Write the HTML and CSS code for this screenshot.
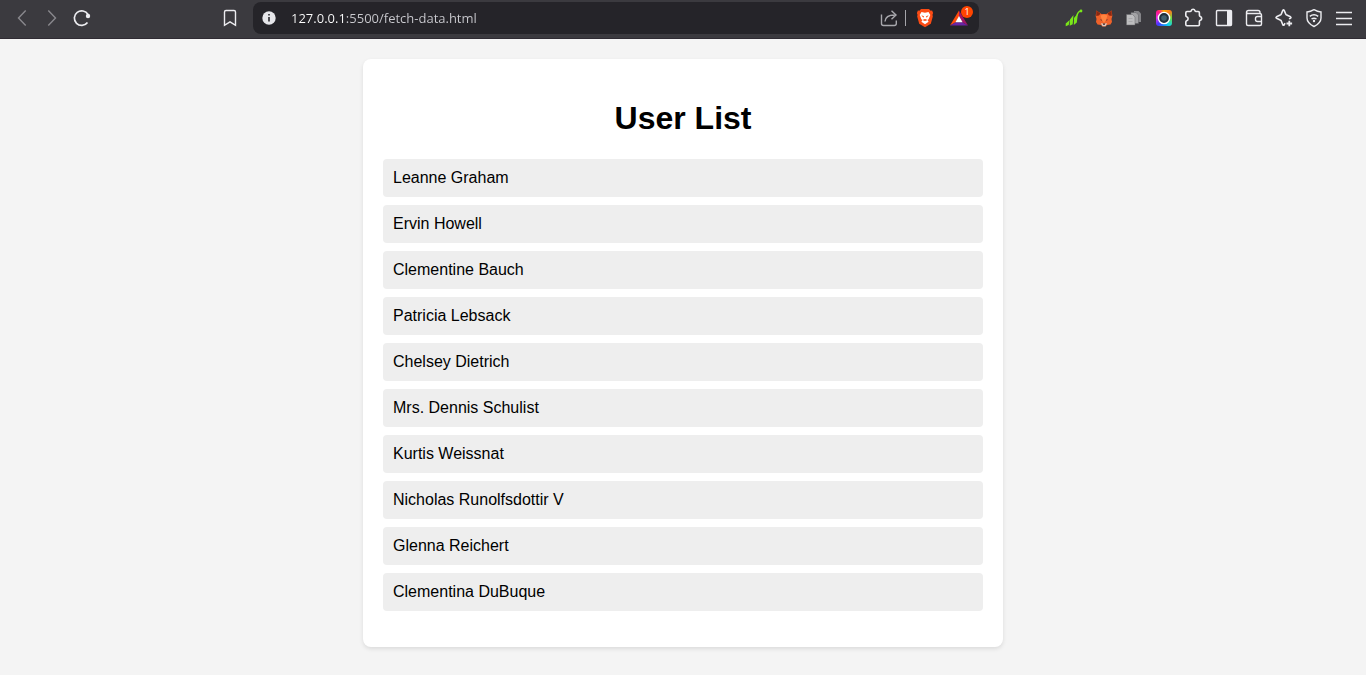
FILE: index.html
```html
<!DOCTYPE html>
<html lang="en">
<head>
<meta charset="utf-8">
<meta name="viewport" content="width=device-width, initial-scale=1">
<title>User List</title>
<link rel="stylesheet" href="styles.css">
</head>
<body>
<header class="toolbar">
  <nav class="group" aria-label="Navigation">
    <button class="tool dim" aria-label="Back"><svg class="icon" viewBox="0 0 24 24"><path d="M15.700 4.500L8.500 12l7.200 7.500"/></svg></button>
    <button class="tool dim" aria-label="Forward"><svg class="icon" viewBox="0 0 24 24"><path d="M8.300 4.500L15.500 12l-7.200 7.500"/></svg></button>
    <button class="tool" aria-label="Reload"><svg class="icon" viewBox="0 0 24 24"><path stroke-width="1.700" d="M18 8.500a7.300 7.300 0 1 0-.5 8"/><circle class="solid" cx="18" cy="10" r="2.200"/></svg></button>
  </nav>
  <button class="tool bookmark" aria-label="Bookmark"><svg class="icon" viewBox="0 0 24 24"><path d="M6.500 19.300V6q0-1.500 1.500-1.500h8q1.500 0 1.500 1.500v13.300L12 15.800z"/></svg></button>
  <div class="address">
    <button class="tool" aria-label="Site information"><svg class="icon" viewBox="0 0 24 24"><circle cx="12" cy="12" r="6.700" fill="#e6e6ea" stroke="none"/><path stroke="#29282d" stroke-width="1.600" d="M12 11v4.500M12 8v1.600"/></svg></button>
    <input class="url" id="url" aria-label="Address" type="text" value="127.0.0.1:5500/fetch-data.html" readonly>
    <button class="tool share" aria-label="Share"><svg class="icon" viewBox="0 0 24 24"><path d="M4.500 8.500v9q0 2 2 2h10.800q2 0 2-2v-3M8 15.500q.5-6.500 9.500-6.500M14.500 4.700L19 9l-4.500 4.300"/></svg></button>
    <span class="divider"></span>
    <button class="tool shield" aria-label="Shields"><svg class="icon" viewBox="0 0 24 24"><path fill="#fb4b14" stroke="none" d="M8 3h8l1.600 1.700 1.500-.1 1 2.400-.6 1.700.3 1.800-2 7.200L12 21.300l-5.800-3.600-2-7.200.3-1.800L3.900 7l1-2.400 1.500.1z"/><path fill="#fff" stroke="none" d="M8.500 6l3.500.8 3.500-.8 1.800 3-1.700 4.300-1 .8 1 1.600-3.600 2.600-3.600-2.600 1-1.600-1-.8L6.700 9z"/><path fill="#fb4b14" stroke="none" d="M8.300 9.300l2.700.9-.6 1.600zM15.700 9.300l-2.700.9.600 1.600zM9.300 14l2.700-1 2.700 1-2.700.9z"/></svg></button>
    <button class="tool rewards" aria-label="Rewards"><svg class="icon" viewBox="0 0 24 24"><path fill="#ff4b0b" stroke="none" d="M11 4.500L2 19.500l5.700-3.300L11 10.500z"/><path fill="#a31565" stroke="none" d="M11 4.500L20 19.500l-5.700-3.300L11 10.500z"/><path fill="#6a24a4" stroke="none" d="M2 19.500h18l-5.700-3.300H7.700z"/><path fill="#fff" stroke="none" d="M11 10l3.600 6.300H7.400z"/></svg><span class="badge">1</span></button>
  </div>
  <div class="group extensions">
    <button class="tool" aria-label="Chart extension"><svg class="icon" viewBox="0 0 24 24"><path fill="#79e719" stroke="none" d="M3.700 17.500l4-3.500-1 5-3 1.300zM8 13.500L11.500 9l-.8 9.300-3 1.400zM12 12l4-5-1.200 9.500-3 2.500z"/><path stroke="#79e719" stroke-width="1.500" d="M15 9.500q1-4.300 4-4.500"/><circle cx="19" cy="5" r="1.400" fill="#79e719" stroke="none"/></svg></button>
    <button class="tool" aria-label="Fox extension"><svg class="icon" viewBox="0 0 24 24"><path fill="#f0622a" stroke="none" d="M4.300 4.500L9.500 8h5l5.200-3.500.6 5.500-.8 3 .5 3-1.500 2.500-3.500.5-1.500 1.500h-3L9 19l-3.500-.5L4 16l.5-3-.8-3z"/><path fill="#8b2812" stroke="none" d="M4.300 4.500L8.500 7.500 7 9.500l-2.800.5zM19.700 4.500L15.500 7.500 17 9.500l2.800.5z"/><path fill="#ff8440" stroke="none" d="M8.500 9.500l3.500-1 3.500 1L14 14l-2 3-2-3z"/><path fill="#3a2a2e" stroke="none" d="M8 13.500l1.800.3-.3 1zM16 13.500l-1.800.3.300 1z"/><path fill="#d9c8c0" stroke="none" d="M8.800 17.200l3.200.6 3.200-.6-1.700 3.100h-3z"/><path fill="#3a2a2e" stroke="none" d="M11 17.500h2v1.300h-2z"/></svg></button>
    <button class="tool" aria-label="Pages extension"><svg class="icon" viewBox="0 0 24 24"><path fill="#848488" stroke="none" d="M12 5h4.500L19 7.500V16h-7z"/><path fill="#a2a2a5" stroke="#5c5c60" stroke-width=".5" d="M9 6.500h5L16.500 9v8.500H9z"/><path fill="#bdbdbf" stroke="#66666a" stroke-width=".5" d="M4.500 8.500h6l2.500 2.500v8H4.500z"/><path stroke="#a8a8ab" stroke-width="1" d="M6.500 12.500h4M6.500 15.500h4"/></svg></button>
    <button class="tool" aria-label="Camera extension"><span class="camera"><svg class="icon" viewBox="0 0 24 24"><circle cx="12" cy="12" r="5.600" fill="#23303c" stroke="#fff" stroke-width="1.400"/><circle cx="12" cy="12" r="2.800" fill="#43616d" stroke="none"/></svg></span></button>
    <button class="tool" aria-label="Extensions"><svg class="icon" viewBox="0 0 24 24"><path stroke-width="1.600" stroke-linejoin="round" d="M5 5.500h3q1 0 1.200-.8a2 2 0 0 1 3.800 0q.2.800 1.200.8h2q1.200 0 1.200 1.200v2.500q0 1 .9 1.300a2 2 0 0 1 0 3.800q-.9.300-.9 1.200v3q0 1.200-1.200 1.200H5q-1.200 0-1.200-1.200V16q0-.8.900-1.200a2.200 2.200 0 0 0 0-4.100q-.9-.4-.9-1.200V6.700q0-1.200 1.200-1.200z"/></svg></button>
    <button class="tool" aria-label="Sidebar"><svg class="icon" viewBox="0 0 24 24"><rect x="4.500" y="4.500" width="15" height="15" rx="1"/><path class="solid" d="M15 4.500h4.500v15h-4.500z"/></svg></button>
    <button class="tool" aria-label="Wallet"><svg class="icon" viewBox="0 0 24 24"><path d="M19.500 9.500V18q0 1.500-1.500 1.500H6q-1.500 0-1.500-1.500V6.500q0-2 2-2H16q2 0 2 2v1M4.500 6q0 1.500 1.500 1.500h12q1.500 0 1.500 2M19.500 10.500h-4q-2 0-2 2v1q0 2 2 2h4"/></svg></button>
    <button class="tool" aria-label="Assistant"><svg class="icon" viewBox="0 0 24 24"><path stroke-width="1.600" stroke-linejoin="round" d="M13 17.200l-.8 1.600q-.7 1-1.400 0L9.300 15q-.3-.8-1.100-1.100L4.500 12.200q-1-.7 0-1.400l3.700-1.700q.8-.3 1.100-1.100l1.500-3.600q.7-1 1.400 0L13.700 8q.3.800 1.100 1.100l3.700 1.700q1 .7 0 1.400l-1.500.7"/><path stroke-width="1.800" d="M17.300 14.700v5.600M14.500 17.500h5.600"/></svg></button>
    <button class="tool" aria-label="VPN"><svg class="icon" viewBox="0 0 24 24"><path d="M12 3.700q3.500 2 7 2.300v6q0 5-7 8.500-7-3.500-7-8.500V6q3.500-.3 7-2.300z"/><path stroke-width="1.500" d="M7.800 10.300q4.200-3 8.400 0M9.500 13q2.500-1.700 5 0"/><circle class="solid" cx="12" cy="15" r="1.200"/></svg></button>
    <button class="tool" aria-label="Menu"><svg class="icon" viewBox="0 0 24 24"><path d="M4 6.500h16M4 12.500h16M4 18.500h16"/></svg></button>
  </div>
</header>
<main class="container">
  <h1 class="title">User List</h1>
  <ul class="users">
    <li class="user">Leanne Graham</li>
    <li class="user">Ervin Howell</li>
    <li class="user">Clementine Bauch</li>
    <li class="user">Patricia Lebsack</li>
    <li class="user">Chelsey Dietrich</li>
    <li class="user">Mrs. Dennis Schulist</li>
    <li class="user">Kurtis Weissnat</li>
    <li class="user">Nicholas Runolfsdottir V</li>
    <li class="user">Glenna Reichert</li>
    <li class="user">Clementina DuBuque</li>
  </ul>
</main>
</body>
</html>
```
FILE: styles.css
```css
body {
  margin: 0;
  background: #f4f4f4;
  color: #000;
  font-family: "Liberation Sans", Arial, sans-serif;
  font-size: 16px;
}

.toolbar {
  display: flex;
  align-items: center;
  padding: 2px 7px 4px;
  background: #3b3a3f;
  border-bottom: 1px solid #2f2b33;
}

.group {
  display: flex;
}

.tool {
  position: relative;
  display: flex;
  flex: none;
  align-items: center;
  justify-content: center;
  width: 30px;
  height: 32px;
  padding: 0;
  border: 0;
  background: none;
  color: #ececf0;
}

.dim {
  color: #89888d;
}

.icon {
  display: block;
  flex: none;
  width: 24px;
  height: 24px;
  fill: none;
  stroke: currentColor;
  stroke-width: 1.4;
}

.solid {
  fill: currentColor;
  stroke: none;
}

.bookmark {
  margin-left: 118px;
}

.address {
  display: flex;
  flex: 1;
  align-items: center;
  min-width: 0;
  margin-left: 8px;
  padding: 0 2px 0 1px;
  border-radius: 8px;
  background: #252429;
}

.url {
  flex: 1;
  min-width: 0;
  margin-left: 7px;
  padding: 0;
  border: 0;
  outline: 0;
  background: linear-gradient(90deg, #fff 55px, #cbcbd0 55px);
  background-clip: text;
  color: transparent;
  font-family: "Open Sans", "Noto Sans", sans-serif;
  font-size: 13px;
  line-height: 20px;
}

.share {
  color: #a8a8ad;
}

.divider {
  width: 1px;
  height: 16px;
  margin: 0 4px 0 1px;
  background: #a5a5aa;
}

.rewards {
  width: 34px;
  margin-left: 3px;
}

.badge {
  position: absolute;
  top: 4px;
  right: 4px;
  width: 12px;
  height: 12px;
  border-radius: 50%;
  background: #ff4500;
  color: #fff;
  font: 9px/12px "Open Sans", sans-serif;
  text-align: center;
}

.extensions {
  margin-left: 80px;
}

.camera {
  display: flex;
  align-items: center;
  justify-content: center;
  width: 16px;
  height: 16px;
  border-radius: 3px;
  background: conic-gradient(#ffb000, #ff7a1f 12%, #6ddb3b 25%, #11d5e8 40%, #108df5 50%, #4736ff 62%, #e42be9 75%, #ff1784 88%, #ffb000);
}

.container {
  max-width: 600px;
  margin: 20px auto;
  padding: 20px;
  border-radius: 8px;
  background: #fff;
  box-shadow: 0 2px 4px rgba(0, 0, 0, 0.1);
}

.title {
  margin: 21px 0 23px;
  font-size: 32px;
  line-height: 36px;
  text-align: center;
}

.users {
  margin: 16px 0;
  padding: 0;
  list-style: none;
}

.user {
  margin: 8px 0;
  padding: 10px;
  border-radius: 4px;
  background: #eee;
  line-height: 18px;
}
```
